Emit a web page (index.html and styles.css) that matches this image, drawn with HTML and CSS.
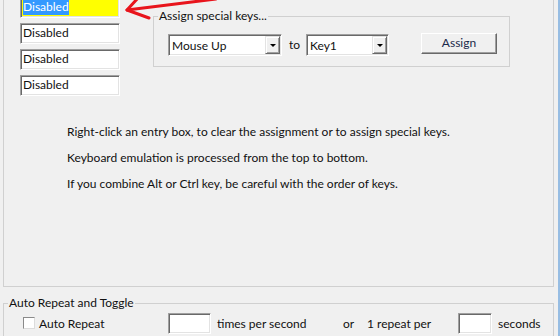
FILE: index.html
```html
<!DOCTYPE html>
<html lang="en">
<head>
  <meta charset="UTF-8" />
  <title>Key Assignment</title>
  <link rel="stylesheet" href="styles.css">
</head>
<body>
  <div class="window">
    <div class="panel">
      <div class="top-row">
        <div class="entries">
          <div class="entry sunken entry-active"><span class="sel">Disabled</span></div>
          <div class="entry sunken">Disabled</div>
          <div class="entry sunken">Disabled</div>
          <div class="entry sunken">Disabled</div>
        </div>

        <fieldset class="group assign-group">
          <legend>Assign special keys...</legend>
          <div class="assign-row">
            <div class="combo sunken combo-src">
              <span class="combo-text">Mouse Up</span>
              <span class="drop"><i class="tri"></i></span>
            </div>
            <span class="to">to</span>
            <div class="combo sunken combo-dst">
              <span class="combo-text">Key1</span>
              <span class="drop"><i class="tri"></i></span>
            </div>
            <div class="btn">Assign</div>
          </div>
        </fieldset>
      </div>

      <div class="notes">
        <p>Right-click an entry box, to clear the assignment or to assign special keys.</p>
        <p>Keyboard emulation is processed from the top to bottom.</p>
        <p>If you combine Alt or Ctrl key, be careful with the order of keys.</p>
      </div>
    </div>

    <fieldset class="group repeat-group">
      <legend>Auto Repeat and Toggle</legend>
      <div class="repeat-row">
        <span class="check"></span>
        <span class="lbl lbl-auto">Auto Repeat</span>
        <span class="field sunken field-times"></span>
        <span class="lbl lbl-times">times per second</span>
        <span class="lbl lbl-or">or</span>
        <span class="lbl lbl-per">1 repeat per</span>
        <span class="field sunken field-secs"></span>
        <span class="lbl">seconds</span>
      </div>
    </fieldset>

    <!-- red annotation arrow drawn over the dialog -->
    <svg class="arrow" width="260" height="30" viewBox="0 0 260 30">
      <g fill="none" stroke="#e8141c" stroke-width="3" stroke-linecap="round" stroke-linejoin="round">
        <path d="M127 10 L216 -1" />
        <path d="M138 -2 L127 10 L149 18" />
      </g>
    </svg>
  </div>
</body>
</html>
```

FILE: styles.css
```css
* {
  margin: 0;
  padding: 0;
  box-sizing: border-box;
}
body {
  background: #f0f0f0;
  color: #111;
  font-family: 'Lato', 'Liberation Sans', sans-serif;
  font-size: 12px;
}
.window {
  position: relative;
  width: 560px;
  height: 336px;
  padding-left: 3px;
  border-right: 2px solid #97bde3;
  overflow: hidden;
}
.sunken {
  background: #fff;
  border: 1px solid;
  border-color: #a0a0a0 #fff #fff #a0a0a0;
  box-shadow: inset 1px 1px 0 #696969, inset -1px -1px 0 #e3e3e3;
}
.panel {
  width: 551px;
  height: 290px;
  border: 1px solid #d0d0d0;
  border-top: none;
}
.top-row {
  display: flex;
  align-items: flex-start;
  margin-top: -3px;
}
.entries {
  margin-left: 16px;
  display: flex;
  flex-direction: column;
  gap: 5px;
}
.entry {
  width: 100px;
  height: 21px;
  padding-left: 2px;
  line-height: 18px;
  white-space: nowrap;
}
.entry-active {
  background: #ffff00;
}
.sel {
  display: inline-block;
  background: #3399ff;
  color: #fff;
  line-height: 16px;
}
.group {
  border: 1px solid #d0d0d0;
  min-width: 0;
}
.group legend {
  margin-left: 4px;
  padding: 0 1px;
  line-height: 16px;
}
.assign-group {
  width: 357px;
  margin-left: 33px;
  margin-top: 11px;
}
.assign-row {
  display: flex;
  align-items: flex-start;
  padding: 10px 0 10px 14px;
}
.combo {
  height: 22px;
  display: flex;
  align-items: stretch;
  padding: 1px;
}
.combo-src {
  width: 114px;
}
.combo-dst {
  width: 83px;
}
.combo-text {
  flex: 1;
  padding-left: 2px;
  line-height: 19px;
}
.drop {
  width: 15px;
  display: flex;
  align-items: center;
  justify-content: center;
  background: #f0f0f0;
  border: 1px solid;
  border-color: #e3e3e3 #696969 #696969 #e3e3e3;
  box-shadow: inset 1px 1px 0 #fff, inset -1px -1px 0 #a0a0a0;
}
.tri {
  width: 0;
  height: 0;
  border-left: 3px solid transparent;
  border-right: 3px solid transparent;
  border-top: 3px solid #000;
}
.to {
  width: 24px;
  padding-left: 7px;
  line-height: 22px;
}
.btn {
  width: 76px;
  height: 21px;
  margin-left: 32px;
  margin-top: -1px;
  text-align: center;
  line-height: 18px;
  background: #f0f0f0;
  border: 1px solid;
  border-color: #fff #696969 #696969 #fff;
  box-shadow: inset -1px -1px 0 #a0a0a0;
  color: #1b2a4a;
}
.notes {
  margin-top: 23px;
  padding-left: 63px;
  line-height: 26px;
}
.repeat-group {
  width: 551px;
  height: 60px;
  margin-top: 8px;
}
.repeat-row {
  display: flex;
  align-items: center;
  padding-left: 19px;
  height: 24px;
}
.check {
  width: 12px;
  height: 12px;
  background: #fff;
  border: 1px solid;
  border-color: #8a8a8a #dcdcdc #dcdcdc #8a8a8a;
}
.lbl {
  white-space: nowrap;
}
.lbl-auto {
  width: 133px;
  padding-left: 4px;
}
.field {
  height: 21px;
}
.field-times {
  width: 43px;
  margin-right: 6px;
}
.field-secs {
  width: 34px;
  margin-right: 6px;
}
.lbl-times {
  width: 126px;
}
.lbl-or {
  width: 24px;
}
.lbl-per {
  width: 91px;
}
.arrow {
  position: absolute;
  left: 0;
  top: 0;
}
```
